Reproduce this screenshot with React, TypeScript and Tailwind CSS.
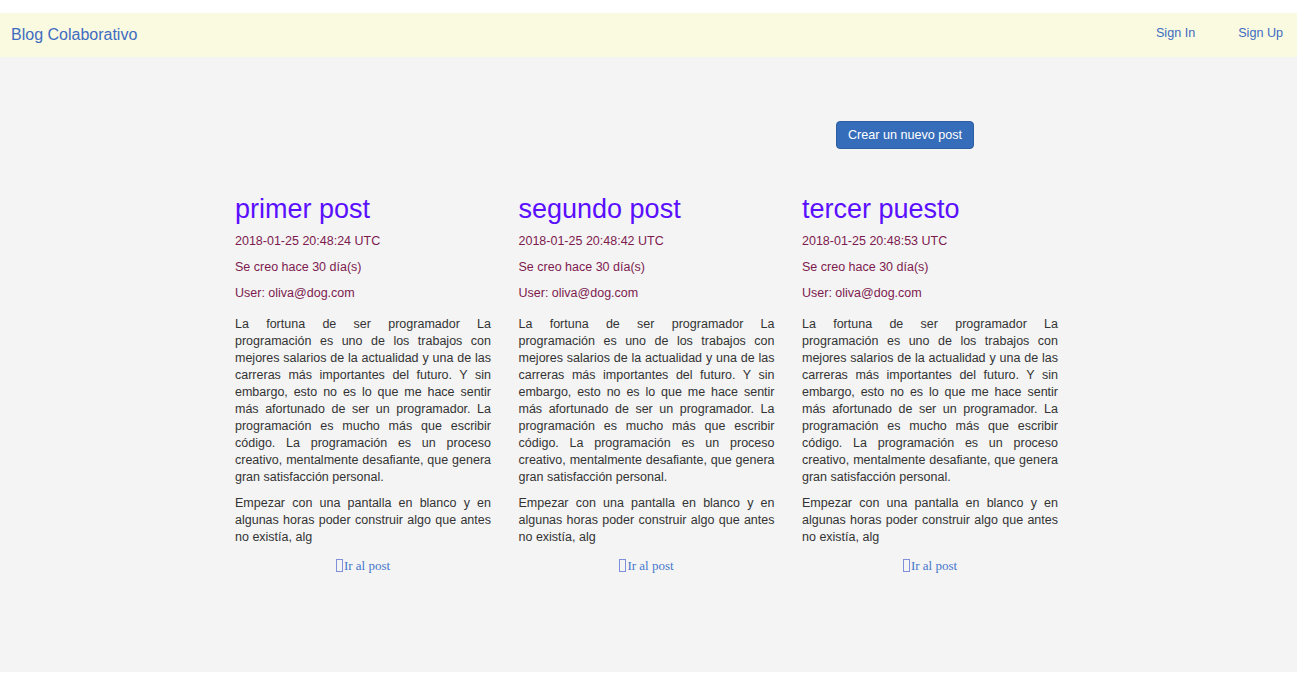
import React from 'react'

const body1 =
  'La fortuna de ser programador La programación es uno de los trabajos con mejores salarios de la actualidad y una de las carreras más importantes del futuro. Y sin embargo, esto no es lo que me hace sentir más afortunado de ser un programador. La programación es mucho más que escribir código. La programación es un proceso creativo, mentalmente desafiante, que genera gran satisfacción personal.'
const body2 =
  'Empezar con una pantalla en blanco y en algunas horas poder construir algo que antes no existía, alg'

const posts = [
  { title: 'primer post', date: '2018-01-25 20:48:24 UTC' },
  { title: 'segundo post', date: '2018-01-25 20:48:42 UTC' },
  { title: 'tercer puesto', date: '2018-01-25 20:48:53 UTC' }
]

function PostCard({ title, date }: { title: string; date: string }) {
  return (
    <div className="w-[256px]">
      <h2 className="text-[27px] leading-[30px] text-[#5a0fff]">{title}</h2>
      <div className="mt-[9px] text-[12.5px] leading-[17px] text-[#7d1a4f]">
        <p>{date}</p>
        <p className="mt-[9px]">Se creo hace 30 día(s)</p>
        <p className="mt-[9px]">User: oliva@dog.com</p>
      </div>
      <div className="mt-[14px] text-[12.5px] leading-[17px] text-[#333] text-justify">
        <p>{body1}</p>
        <p className="mt-[9px]">{body2}</p>
      </div>
      <div className="mt-[11px] flex justify-center">
        <a className="flex items-center text-[13px] leading-[17px] text-[#4677cc] font-['Liberation_Serif',serif]">
          <span className="inline-block w-[7px] h-[13px] border border-[#7f8fdc] mr-[1px]"></span>
          Ir al post
        </a>
      </div>
    </div>
  )
}

export default function App() {
  return (
    <div className="font-['Liberation_Sans',Arial,sans-serif] bg-white w-[1300px] h-[700px]">
      <div className="h-[13px]"></div>
      <nav className="w-[1297px] h-[44px] bg-[#fafae1] flex items-center justify-between pl-[11px] pr-[14px]">
        <a className="text-[16px] text-[#3e6cc0]">Blog Colaborativo</a>
        <div className="flex gap-[43px] text-[12.6px] text-[#3e6cc0] -mt-[4px]">
          <a>Sign In</a>
          <a>Sign Up</a>
        </div>
      </nav>

      <main className="w-[1297px] h-[615px] bg-[#f4f4f4]">
        <div className="pt-[64px] pl-[836px]">
          <button className="h-[28px] px-[11px] rounded-[4px] bg-[#366dba] border border-[#2e5e9f] text-white text-[12.6px]">
            Crear un nuevo post
          </button>
        </div>
        <div className="pl-[235px] mt-[45px] grid grid-cols-[256px_256px_256px] gap-x-[27.5px]">
          {posts.map((p) => (
            <PostCard key={p.title} title={p.title} date={p.date} />
          ))}
        </div>
      </main>
    </div>
  )
}
